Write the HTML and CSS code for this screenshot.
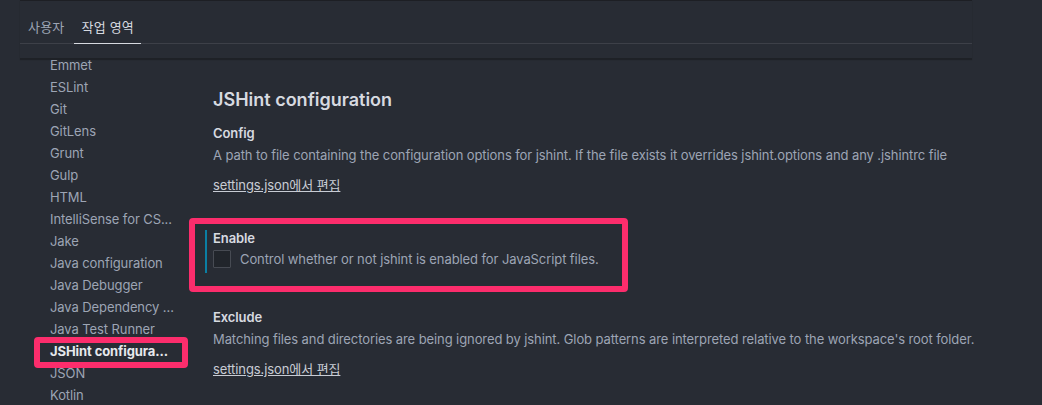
FILE: index.html
```html
<!DOCTYPE html>
<html lang="ko">
<head>
<meta charset="utf-8">
<title>Settings</title>
<link rel="stylesheet" href="styles.css">
</head>
<body>
<div class="page">
  <div class="header">
    <div class="tabs">
      <div class="tab">사용자</div>
      <div class="tab active">작업 영역</div>
    </div>
  </div>
  <div class="body">
    <ul class="toc">
      <li>Emmet</li>
      <li>ESLint</li>
      <li>Git</li>
      <li>GitLens</li>
      <li>Grunt</li>
      <li>Gulp</li>
      <li>HTML</li>
      <li>IntelliSense for CS...</li>
      <li>Jake</li>
      <li>Java configuration</li>
      <li>Java Debugger</li>
      <li>Java Dependency ...</li>
      <li>Java Test Runner</li>
      <li class="selected">JSHint configura...</li>
      <li>JSON</li>
      <li>Kotlin</li>
    </ul>
    <div class="main">
      <h2 class="group-title">JSHint configuration</h2>
      <div class="setting">
        <div class="label">Config</div>
        <div class="desc">A path to file containing the configuration options for jshint. If the file exists it overrides jshint.options and any .jshintrc file</div>
        <a class="edit-link">settings.json에서 편집</a>
      </div>
      <div class="setting focused">
        <div class="label">Enable</div>
        <div class="check-row">
          <span class="checkbox"></span>
          <span class="check-text">Control whether or not jshint is enabled for JavaScript files.</span>
        </div>
      </div>
      <div class="setting">
        <div class="label">Exclude</div>
        <div class="desc">Matching files and directories are being ignored by jshint. Glob patterns are interpreted relative to the workspace's root folder.</div>
        <a class="edit-link">settings.json에서 편집</a>
      </div>
    </div>
  </div>
</div>
<div class="mark mark-tab"></div>
<div class="mark mark-toc"></div>
<div class="mark mark-enable"></div>
</body>
</html>
```

FILE: styles.css
```css
html, body {
  margin: 0;
  padding: 0;
  background: #282c34;
  height: 100%;
  overflow: hidden;
}
body {
  font-family: "Inter", "Noto Sans CJK KR", sans-serif;
  font-size: 13px;
  letter-spacing: -0.09px;
  color: #9da5b4;
  position: relative;
}
.page {
  width: 952px;
  margin-left: 20px;
}
.header {
  position: relative;
  z-index: 1;
  height: 57px;
  background: #282c34;
  border-top: 1px solid #1d1f24;
  border-bottom: 1px solid #1e2126;
  box-shadow: 0 1px 1px rgba(0, 0, 0, 0.25);
}
.tabs {
  display: flex;
  height: 42px;
  border-bottom: 1px solid #3d4048;
  padding-left: 1px;
}
.tab {
  display: flex;
  align-items: center;
  padding: 9px 7px 0;
  color: #9da5b4;
  font-size: 13px;
  letter-spacing: 0.2px;
}
.tab.active {
  margin-left: 3px;
  color: #d7dae0;
  border-bottom: 1px solid #d7dae0;
  margin-bottom: -1px;
}
.body {
  display: flex;
  margin-top: -5px;
}
.toc {
  list-style: none;
  margin: 0;
  padding: 0;
  width: 185px;
  flex: none;
}
.toc li {
  height: 22px;
  line-height: 22px;
  padding-left: 30px;
  color: #9da5b4;
  white-space: nowrap;
}
.toc li.selected {
  color: #e6e8ec;
  font-weight: 700;
}
.main {
  flex: 1;
  padding-top: 34px;
}
.group-title {
  margin: 0 0 13px 8px;
  font-size: 18px;
  line-height: 24px;
  font-weight: 600;
  letter-spacing: 0;
  color: #d7dae0;
}
.setting {
  border-left: 2px solid transparent;
  padding: 0 0 0 6px;
  margin-bottom: 36px;
}
.setting.focused {
  border-left-color: #0b7fa3;
  padding-bottom: 5px;
}
.label {
  line-height: 16px;
  font-weight: 600;
  color: #d7dae0;
}
.desc {
  margin-top: 5px;
  line-height: 18px;
  color: #9da5b4;
  white-space: nowrap;
}
.edit-link {
  display: inline-block;
  margin-top: 12px;
  line-height: 18px;
  color: #c8ccd4;
  text-decoration: underline;
}
.check-row {
  display: flex;
  align-items: center;
  margin-top: 4px;
  gap: 9px;
}
.checkbox {
  width: 16px;
  height: 16px;
  background: #21252b;
  border: 1px solid #474b53;
  border-radius: 1px;
}
.check-text {
  line-height: 18px;
  color: #9da5b4;
}
.mark {
  position: absolute;
  border: 6px solid #fc2d6c;
  border-radius: 4px;
  box-sizing: border-box;
}
.mark-tab {
  left: 68px;
  top: 9px;
  width: 82px;
  height: 48px;
}
.mark-toc {
  left: 34px;
  top: 337px;
  width: 154px;
  height: 31px;
}
.mark-enable {
  left: 189px;
  top: 218px;
  width: 439px;
  height: 74px;
}
```
